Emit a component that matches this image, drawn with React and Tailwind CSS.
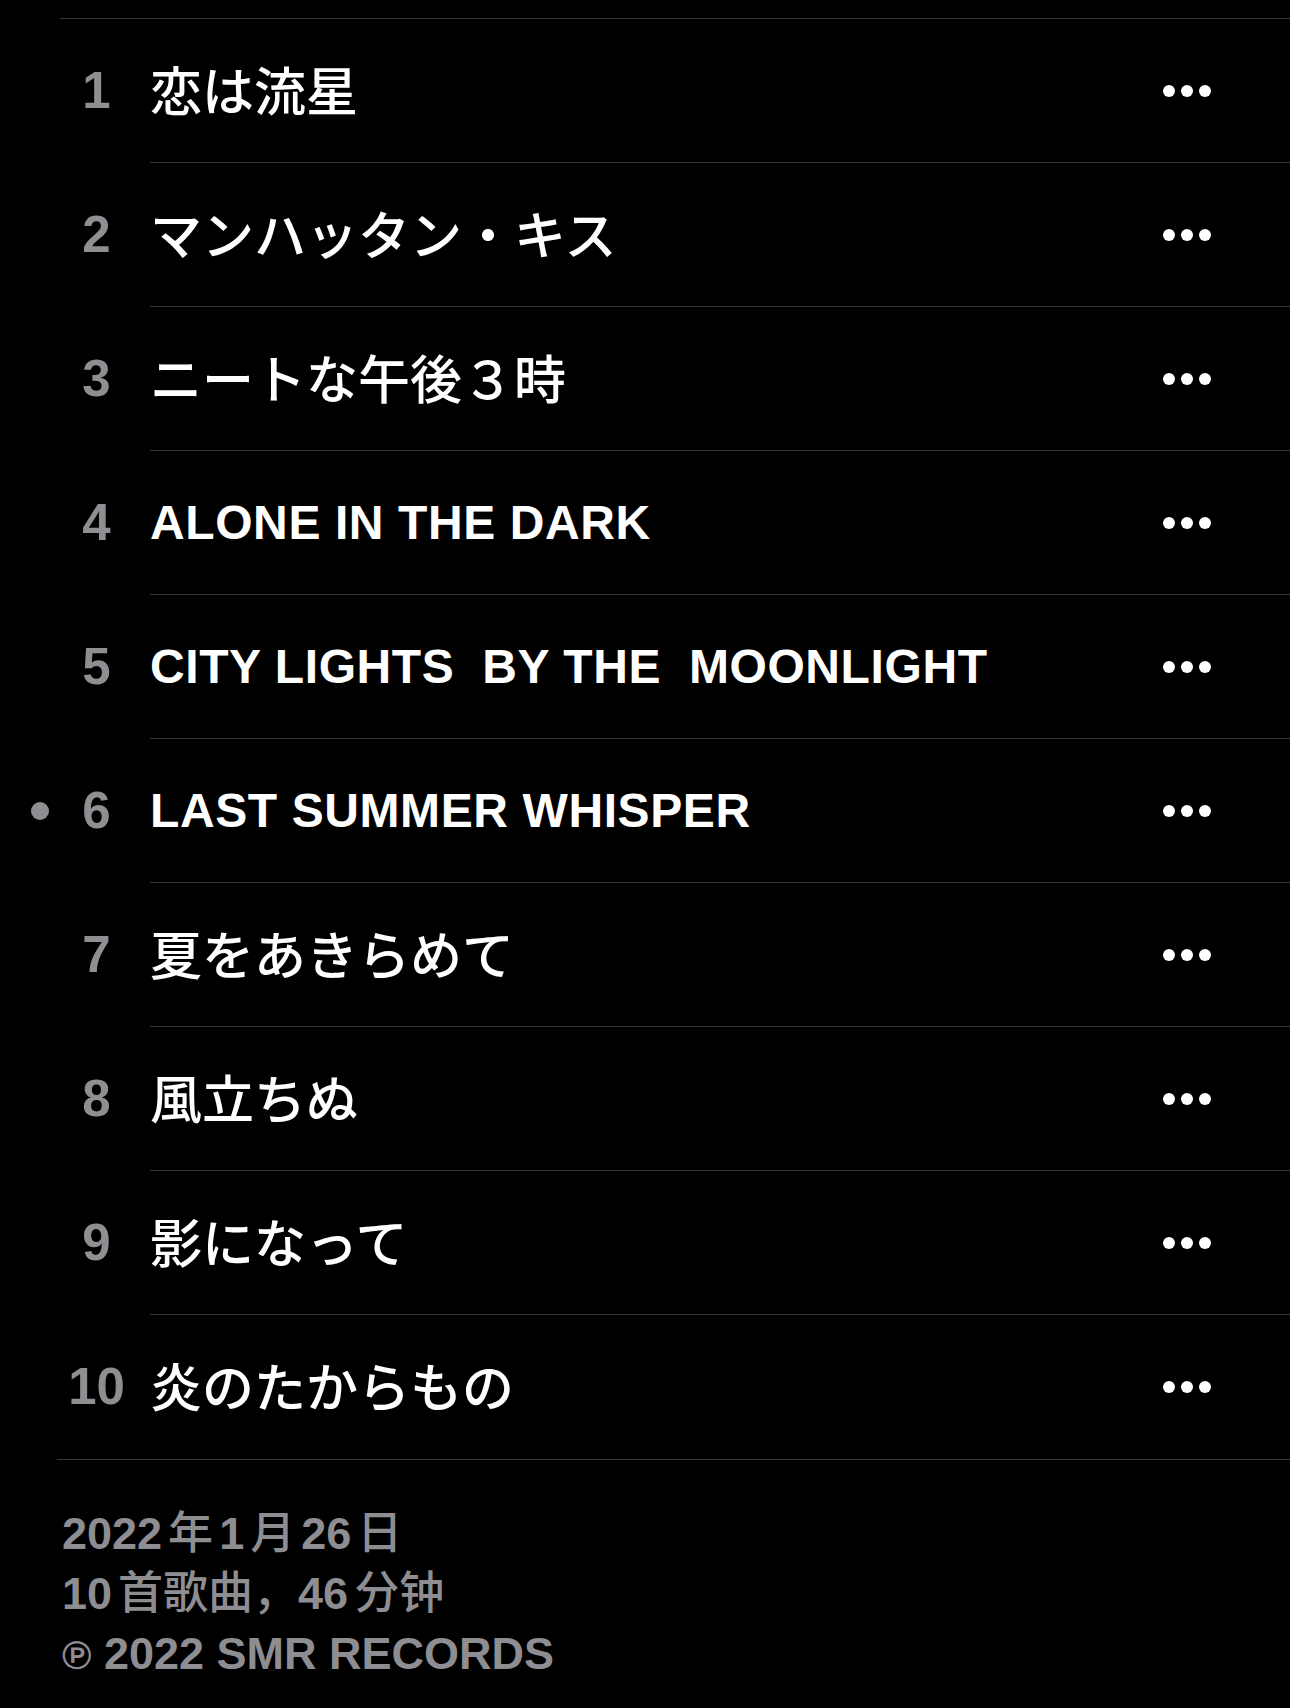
import React from "react";

const tracks = [
    { no: 1, title: "恋は流星", jp: true },
    { no: 2, title: "マンハッタン・キス", jp: true },
    { no: 3, title: "ニートな午後３時", jp: true },
    { no: 4, title: "ALONE IN THE DARK" },
    { no: 5, title: "CITY LIGHTS  BY THE  MOONLIGHT" },
    { no: 6, title: "LAST SUMMER WHISPER", playing: true },
    { no: 7, title: "夏をあきらめて", jp: true },
    { no: 8, title: "風立ちぬ", jp: true },
    { no: 9, title: "影になって", jp: true },
    { no: 10, title: "炎のたからもの", jp: true },
];

const MoreDots = () => (
    <div className="flex items-center gap-[6px]">
        <span className="w-[12px] h-[12px] rounded-full bg-white" />
        <span className="w-[12px] h-[12px] rounded-full bg-white" />
        <span className="w-[12px] h-[12px] rounded-full bg-white" />
    </div>
);

const TrackRow = ({ track, last }) => (
    <div className="relative flex">
        {track.playing && (
            <span className="absolute left-[-29px] top-1/2 -translate-y-1/2 w-[18px] h-[18px] rounded-full bg-[#8e8e93]" />
        )}
        <div className="w-[73px] flex items-center justify-center text-[51px] font-bold text-[#8e8e93]">
            {track.no}
        </div>
        <div className={`flex-1 ml-[17px] h-[144px] flex items-center justify-between pr-[79px] ${last ? "" : "border-b border-[#38383a]"}`}>
            <span
                className={`whitespace-pre text-white ${track.jp ? "text-[52px] font-medium pt-[4px]" : "text-[48px] font-bold tracking-[0.6px]"}`}
            >
                {track.title}
            </span>
            <MoreDots />
        </div>
    </div>
);

export default function App() {
    return (
        <div className="min-h-[1708px] w-[1290px] bg-black font-['Liberation_Sans','Noto_Sans_CJK_JP',sans-serif]">
            <div className="pt-[18px] pl-[60px]">
                <div className="border-t border-[#38383a]" />
                {tracks.map((t, i) => (
                    <TrackRow key={t.no} track={t} last={i === tracks.length - 1} />
                ))}
                <div className="border-t border-[#38383a] -ml-[3px]" />
            </div>

            {/* album info */}
            <div className="pl-[62px] pt-[44px] text-[45px] leading-[60px] font-bold text-[#8d8d92] font-['Liberation_Sans','Noto_Sans_CJK_SC',sans-serif]">
                <p>
                    2022<span className="mx-[6px] font-medium">年</span>1<span className="mx-[6px] font-medium">月</span>26<span className="ml-[6px] font-medium">日</span>
                </p>
                <p>
                    10<span className="ml-[6px] font-medium">首歌曲，</span>46<span className="ml-[6px] font-medium">分钟</span>
                </p>
                <p>
                    <span className="text-[40px]">℗</span> 2022 SMR RECORDS
                </p>
            </div>
        </div>
    );
}
